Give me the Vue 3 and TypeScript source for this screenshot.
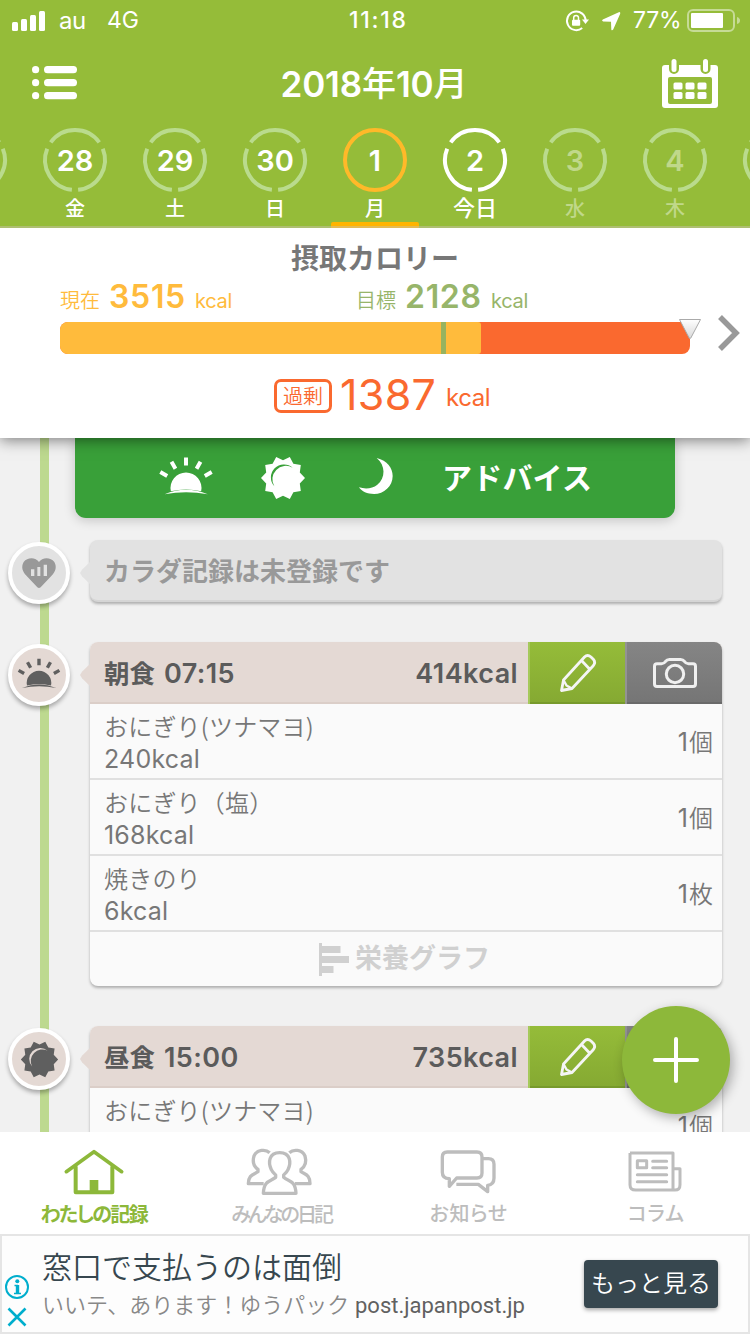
<script setup lang="ts">
interface Day { num: string; label: string; state: 'past' | 'active' | 'today' | 'future' }
interface Food { name: string; kcal: string; amount: string }
interface Meal { title: string; time: string; kcal: string; icon: 'sunrise' | 'sun'; foods: Food[] }

const days: Day[] = [
  { num: '', label: '', state: 'past' },
  { num: '28', label: '金', state: 'past' },
  { num: '29', label: '土', state: 'past' },
  { num: '30', label: '日', state: 'past' },
  { num: '1', label: '月', state: 'active' },
  { num: '2', label: '今日', state: 'today' },
  { num: '3', label: '水', state: 'future' },
  { num: '4', label: '木', state: 'future' },
  { num: '', label: '', state: 'future' },
]

const meals: Meal[] = [
  {
    title: '朝食', time: '07:15', kcal: '414kcal', icon: 'sunrise',
    foods: [
      { name: 'おにぎり(ツナマヨ)', kcal: '240', amount: '個' },
      { name: 'おにぎり（塩）', kcal: '168', amount: '個' },
      { name: '焼きのり', kcal: '6', amount: '枚' },
    ],
  },
  {
    title: '昼食', time: '15:00', kcal: '735kcal', icon: 'sun',
    foods: [{ name: 'おにぎり(ツナマヨ)', kcal: '', amount: '個' }],
  },
]

// Ten-pointed star outline for the midday sun
const sunPoints = Array.from({ length: 20 }, (_, i) => {
  const r = i % 2 === 0 ? 66 : 53
  const a = (i * Math.PI) / 10
  return `${(r * Math.cos(a)).toFixed(1)},${(r * Math.sin(a)).toFixed(1)}`
}).join(' ')
</script>

<template>
  <div class="screen">
    <header class="header">
      <div class="status">
        <svg class="signal" width="33" height="20" viewBox="0 0 33 20" fill="#fff">
          <rect x="0" y="11" width="6" height="9" rx="1.5" /><rect x="9" y="8" width="6" height="12" rx="1.5" />
          <rect x="18" y="4" width="6" height="16" rx="1.5" /><rect x="27" y="0" width="6" height="20" rx="1.5" />
        </svg>
        <span class="carrier">au</span><span class="network">4G</span>
        <span class="clock">11:18</span>
        <svg class="lock" width="24" height="22" viewBox="0 0 24 22" fill="none" stroke="#fff">
          <path d="M20.6 11 A9.3 9.3 0 1 0 17.2 18" stroke-width="2" />
          <path d="M17 9.6 H24 L20.5 14 Z" fill="#fff" stroke="none" />
          <rect x="7" y="9.8" width="8.2" height="6" rx="1" fill="#fff" stroke="none" />
          <path d="M8.7 10 V7.8 a2.4 2.4 0 0 1 4.8 0 V10" stroke-width="1.5" />
        </svg>
        <svg class="locate" width="20" height="20" viewBox="0 0 20 20" fill="#fff"><path d="M16.800 1.200 L.8 8.600 Q-.8 10.200 1.200 10.400 L9 10.800 L9.300 18.400 Q9.800 20 11.200 18.600 L18.200 2.800 Q18.600 .6 16.800 1.200Z" /></svg>
        <span class="percent">77%</span>
        <svg class="battery" width="54" height="24" viewBox="0 0 54 24" fill="none">
          <rect x="1" y="1" width="46" height="21" rx="5" stroke="#c6db96" stroke-width="2" />
          <rect x="4" y="4" width="32" height="15" rx="1" fill="#fff" />
          <path d="M50 8 q3 1 3 3.5 q0 2.500 -3 3.500z" fill="#c6db96" />
        </svg>
      </div>
      <div class="nav">
        <svg class="menu" width="46" height="34" viewBox="0 0 46 34" fill="#fff">
          <g v-for="n in 3" :key="n" :transform="`translate(0 ${(n - 1) * 13})`">
            <circle cx="3.600" cy="3.700" r="3.600" /><rect x="12" y="0" width="33" height="7.300" rx="3.600" />
          </g>
        </svg>
        <h1><b>2018</b><span>年</span><b>10</b><span>月</span></h1>
        <svg width="56" height="50" viewBox="0 0 56 50">
          <rect x="0" y="6" width="56" height="43" rx="3" fill="#fff" />
          <path d="M7 0h10v10a5 5 0 0 1-10 0zM38.500 0h10v10a5 5 0 0 1-10 0z" fill="#95bc39" />
          <rect x="9.500" y="0" width="5" height="13" rx="2.500" fill="#fff" /><rect x="41" y="0" width="5" height="13" rx="2.500" fill="#fff" />
          <rect x="6" y="18" width="44" height="27" rx="2" fill="#95bc39" />
          <g fill="#fff">
            <rect x="11.500" y="23.500" width="9" height="7" rx="1.500" /><rect x="23.500" y="23.500" width="9" height="7" rx="1.500" /><rect x="35.500" y="23.500" width="9" height="7" rx="1.500" />
            <rect x="11.500" y="33" width="9" height="7" rx="1.500" /><rect x="23.500" y="33" width="9" height="7" rx="1.500" /><rect x="35.500" y="33" width="9" height="7" rx="1.500" />
          </g>
        </svg>
      </div>
      <div class="days">
        <div v-for="(d, i) in days" :key="i" class="day" :class="d.state">
          <div class="ring">
            <svg width="64" height="64" viewBox="0 0 64 64" fill="none" stroke-width="4">
              <circle v-if="d.state === 'active'" cx="32" cy="32" r="30" />
              <path v-else d="M7.700 14.400A30 30 0 0 1 56.300 14.400M59.800 20.800A30 30 0 0 1 35.100 61.800M28.900 61.800A30 30 0 0 1 4.200 20.800" />
            </svg>
            <span>{{ d.num }}</span>
          </div>
          <div class="label">{{ d.label }}</div>
        </div>
      </div>
    </header>

    <section class="summary">
      <h2>摂取カロリー</h2>
      <div class="figures">
        <div class="figure now"><span class="cap">現在</span><b>3515</b><span class="unit">kcal</span></div>
        <div class="figure goal"><span class="cap">目標</span><b>2128</b><span class="unit">kcal</span></div>
      </div>
      <div class="gauge">
        <div class="fill"></div><div class="tick"></div>
        <svg class="pointer" width="24" height="22" viewBox="0 0 24 22">
          <defs><linearGradient id="pointer" x2="0" y2="1"><stop offset="0" stop-color="#fff" /><stop offset="1" stop-color="#d8d8d8" /></linearGradient></defs>
          <path d="M1.500 1.500H22.500L12.800 20Q12 21.300 11.200 20Z" fill="url(#pointer)" stroke="#aaa" />
        </svg>
      </div>
      <div class="excess"><span class="badge">過剰</span><b>1387</b><span class="unit">kcal</span></div>
      <svg class="chevron" width="24" height="38" viewBox="0 0 24 38" fill="none" stroke="#999" stroke-width="5.500"><path d="M4 3L20 19L4 35" /></svg>
    </section>

    <main class="timeline">
      <div class="line"></div>
      <div class="advice">
        <svg class="a-sunrise" width="58" height="42" viewBox="0 0 176 126" fill="#fff" stroke="#fff">
          <path d="M42 109A47 47 0 1 1 134 109Q88 99 42 109Z" stroke="none" /><path d="M23 118Q88 92 154 118Q88 106 23 118Z" stroke="none" />
          <path stroke-width="12" d="M88 7V31M44 20L56 41M132 20L120 41M10 51L31 63M166 51L145 63" />
        </svg>
        <svg class="a-sun" width="46" height="44" viewBox="-69 -66 138 132" fill="#fff">
          <polygon :points="sunPoints" /><path fill="#39a039" d="M-26 25A39.300 39.300 0 0 1 29 -31A40.500 40.500 0 0 0 -26 25Z" />
        </svg>
        <svg class="a-moon" width="34" height="36" viewBox="0 0 102 108" fill="#fff"><path d="M53 0C85 8 101 30 101 54C101 85 75 108 45 108C25 108 8 101 0 88C20 94 40 92 55 80C80 60 80 22 53 0Z" /></svg>
        <span>アドバイス</span>
      </div>

      <div class="entry body-entry">
        <div class="node">
          <svg width="34" height="31" viewBox="0 0 102 93">
            <path fill="#999" d="M51 12C60-2 85-4 97 12C106 28 99 42 90 52L56 88Q51 92 46 88L12 52C3 42-4 28 5 12C17-4 42-2 51 12Z" />
            <path fill="#e2e2e2" d="M27 34h10v20H27zM46 27h9v27H46zM65 20h10v34H65z" />
          </svg>
        </div>
        <div class="card-body">カラダ記録は未登録です</div>
      </div>

      <div v-for="m in meals" :key="m.title" class="entry meal">
        <div class="node">
          <svg v-if="m.icon === 'sunrise'" class="n-sunrise" width="46" height="33" viewBox="0 0 176 126" fill="#5f5f5f" stroke="#5f5f5f">
            <path d="M42 109A47 47 0 1 1 134 109Q88 99 42 109Z" stroke="none" /><path d="M23 118Q88 92 154 118Q88 106 23 118Z" stroke="none" />
            <path stroke-width="13" d="M88 7V31M44 20L56 41M132 20L120 41M10 51L31 63M166 51L145 63" />
          </svg>
          <svg v-else width="39" height="39" viewBox="-69 -69 138 138" fill="#5f5f5f">
            <polygon :points="sunPoints" /><path fill="#e4d9d4" d="M-26 25A39.300 39.300 0 0 1 29 -31A41 41 0 0 0 -26 25Z" />
          </svg>
        </div>
        <div class="card">
          <div class="card-head">
            <div class="meal-title"><span class="jp">{{ m.title }}</span><span class="time">{{ m.time }}</span></div>
            <div class="total">{{ m.kcal }}</div>
            <div class="btn edit">
              <svg width="44" height="44" viewBox="0 0 44 44" fill="none" stroke="#f5f5f5" stroke-width="2.800" stroke-linejoin="round">
                <path d="M5.500 39.500L7.500 29L28.500 6Q31.500 3 35 6L37.500 8.500Q40 11.500 37 15L16 37.500ZM25.500 9.500L34 18.500" /><path d="M7.500 29L10.500 34.500L16 37.500" stroke-width="2.400" />
              </svg>
            </div>
            <div class="btn photo">
              <svg width="48" height="38" viewBox="0 0 48 38" fill="none" stroke="#f0f0f0" stroke-width="3">
                <path d="M6 9.800H10.500Q13 9.800 14.500 7.500Q16 5.500 18.500 5.500H29.500Q32 5.500 33.500 7.500Q35 9.800 37.500 9.800H42Q44.500 9.800 44.500 12.300V30Q44.500 32.500 42 32.500H6Q3.500 32.500 3.500 30V12.300Q3.500 9.800 6 9.800Z" /><circle cx="24" cy="20" r="8.700" />
              </svg>
            </div>
          </div>
          <div v-for="f in m.foods" :key="f.name" class="food">
            <div><div class="name">{{ f.name }}</div><div v-if="f.kcal" class="kcal">{{ f.kcal }}kcal</div></div>
            <div class="amount"><i>1</i>{{ f.amount }}</div>
          </div>
          <div v-if="m.foods.length > 1" class="graph">
            <svg width="30" height="33" viewBox="0 0 30 33" fill="#d0d0d0"><path d="M0 0H3V3H21.500V10H3V13H30V20H3V23H14.500V30H3V33H0Z" /></svg>
            <span>栄養グラフ</span>
          </div>
        </div>
      </div>
      <div class="fab"><svg width="46" height="46" viewBox="0 0 46 46" stroke="#fff" stroke-width="4" stroke-linecap="round"><path d="M23 2V44M2 23H44" /></svg></div>
    </main>

    <nav class="tabs">
      <div class="tab on">
        <svg width="60" height="46" viewBox="191 58 180 138" fill="none" stroke="#8db83a" stroke-linecap="round" stroke-linejoin="round">
          <path stroke-width="11" d="M198 126L281 66L364 126" /><path stroke-width="12" d="M226 112V188H336V112" /><path d="M268 151H294V188H268Z" fill="#8db83a" stroke="none" />
        </svg>
        <span class="t1">わたしの記録</span>
      </div>
      <div class="tab">
        <svg class="i2" width="66" height="48" viewBox="737 54 198 144" fill="none" stroke="#bdbdbd" stroke-width="10" stroke-linejoin="round">
          <path d="M808 68C796 57 770 58 761 78C755 98 763 111 773 118V125C760 134 744 134 744 161H790" />
          <path d="M867 68C879 57 905 58 914 78C920 98 912 111 902 118V125C915 134 929 134 929 161H884" />
          <path d="M838 68C805 68 803 98 813 119Q817 128 826 135V142C810 155 791 150 789 190H887C885 150 865 155 850 142V135Q859 128 863 119C873 98 871 68 838 68Z" />
        </svg>
        <span class="t2">みんなの日記</span>
      </div>
      <div class="tab">
        <svg class="i3" width="56" height="46" viewBox="197 56 168 138" fill="none" stroke="#bdbdbd" stroke-width="10" stroke-linejoin="round">
          <path d="M219 65H308Q323 65 323 80V128Q323 143 308 143H247L225 168V145Q204 145 204 126V80Q204 65 219 65Z" />
          <path d="M326 85H342Q359 85 359 102V143Q359 163 340 165V184L312 162H246" />
        </svg>
        <span class="t3">お知らせ</span>
      </div>
      <div class="tab">
        <svg class="i3" width="54" height="44" viewBox="761 62 162 132" fill="none" stroke="#bdbdbd" stroke-width="9" stroke-linejoin="round">
          <path d="M767 71H896V180M767 71V166Q767 182 784 182H902Q917 182 917 166V118H898" /><rect x="789" y="94" width="28" height="21" />
          <path stroke-linecap="round" d="M835 96H877M835 115H877M789 136H877M789 157H877" />
        </svg>
        <span class="t4">コラム</span>
      </div>
    </nav>

    <aside class="ad">
      <div class="ad-icons">
        <svg width="24" height="24" viewBox="0 0 24 24" fill="none" stroke="#00aecd"><circle cx="12" cy="12" r="11" stroke-width="2" /><path stroke-width="3.400" d="M12.500 10V19" /><path stroke-width="1.600" d="M9.500 10.500H13M9 18.500H16" /><circle cx="12.300" cy="6.300" r="2" fill="#00aecd" stroke="none" /></svg>
        <svg width="20" height="20" viewBox="0 0 20 20" stroke="#00aecd" stroke-width="2.600"><path d="M1.500 1.500L18.500 18.500M18.500 1.500L1.500 18.500" /></svg>
      </div>
      <div class="ad-text">
        <div class="ad-title">窓口で支払うのは面倒</div>
        <div class="ad-sub"><span class="copy">いいテ、あります！ゆうパック</span><span class="url">post.japanpost.jp</span></div>
      </div>
      <div class="ad-btn">もっと見る</div>
    </aside>
  </div>
</template>

<style>
html, body { margin: 0; background: #f1f1f1; overflow: hidden; }
</style>

<style scoped>
* { box-sizing: border-box; }
.screen { width: 750px; height: 1334px; display: flex; flex-direction: column; overflow: hidden; white-space: nowrap; font-family: Inter, "Noto Sans CJK JP", sans-serif; background: #f1f1f1; }
svg { display: block; flex: none; overflow: visible; }
h1, h2 { margin: 0; }
.header { flex: none; height: 228px; background: #95bc39; color: #fff; overflow: hidden; position: relative; z-index: 3; }
.header::after { content: ""; position: absolute; left: 0; right: 0; bottom: 0; height: 2px; background: rgba(200, 193, 170, .5); }
.status { height: 40px; display: grid; grid-template-columns: 47px 48px 242px 217px 36px 31px 54px 1fr; padding-left: 12px; align-items: center; font-size: 23px; line-height: 41px; }
.carrier { font-size: 24px; letter-spacing: -.4px; }
.network { font-size: 23px; }
.clock { font-weight: 500; letter-spacing: 1.700px; }
.lock { margin-left: -1px; }
.percent { letter-spacing: -.3px; }
.nav { height: 88px; display: flex; justify-content: space-between; align-items: center; padding: 0 32px; }
.menu { margin-top: -2px; margin-right: 8px; }
h1 { font: 500 34px/50px "Noto Sans CJK JP", sans-serif; display: flex; align-items: center; }
h1 span { margin-top: -5px; }
h1 b { font: 600 35px/50px Inter, sans-serif; letter-spacing: -.2px; }
.days { display: flex; margin-left: -75px; width: 900px; height: 100px; }
.day { width: 100px; display: flex; flex-direction: column; align-items: center; position: relative; }
.ring { width: 64px; height: 64px; display: grid; place-items: center; font-size: 29px; font-weight: 600; }
.ring > * { grid-area: 1 / 1; }
.ring svg { stroke: #badb8d; }
.label { font: 500 20px/31px "Noto Sans CJK JP", sans-serif; }
.active svg { stroke: #ffb929; }
.active::after { content: ""; position: absolute; left: 6px; right: 6px; bottom: 0; height: 6px; background: #ffb400; border-radius: 2px 2px 0 0; }
.today svg { stroke: #fff; }
.today .label { font-size: 22px; line-height: 29px; }
.future span, .future .label { color: #c0d88a; }
.summary { flex: none; height: 210px; background: #fff; position: relative; z-index: 2; box-shadow: 0 2px 14px rgba(0, 0, 0, .5); display: flex; flex-direction: column; }
h2 { font: 700 28px/36px "Noto Sans CJK JP", sans-serif; color: #777; text-align: center; padding-top: 11px; height: 48px; }
.figures { display: flex; padding-left: 60px; height: 46px; }
.figure { width: 296px; display: flex; align-items: baseline; line-height: 42px; }
.figure .cap { font-family: "Noto Sans CJK JP", sans-serif; font-weight: 350; font-size: 20px; width: 49px; }
.figure b { font-size: 32px; font-weight: 600; width: 86px; letter-spacing: .7px; }
.figure .unit { font-size: 20px; letter-spacing: -.3px; }
.now { color: #ffbb3c; }
.goal { color: #97b56a; }
.gauge { width: 630px; height: 32px; margin-left: 60px; border-radius: 8px; background: #fa692f; position: relative; }
.fill { width: 421px; height: 32px; background: #ffbb3c; border-radius: 8px 3px 3px 8px; }
.tick { position: absolute; left: 381px; top: 0; width: 5px; height: 32px; background: #97b35f; }
.pointer { position: absolute; left: 618px; top: -4px; }
.excess { display: flex; align-items: baseline; color: #fa692f; padding-left: 274px; margin-top: 12px; line-height: 56px; }
.badge { font: 350 20px/27px "Noto Sans CJK JP", sans-serif; border: 3.500px solid #fa692f; border-radius: 7px; width: 58px; height: 34px; text-align: center; margin-right: 8px; position: relative; top: -6px; }
.excess b { font-size: 43px; font-weight: 400; width: 106px; letter-spacing: .3px; }
.excess .unit { font-size: 24px; position: relative; top: -4px; letter-spacing: -.4px; }
.chevron { position: absolute; left: 716px; top: 86px; }
.timeline { flex: none; height: 694px; position: relative; overflow: hidden; z-index: 1; }
.line { position: absolute; left: 40px; top: 0; width: 9px; height: 694px; background: #bdd98f; }
.advice { width: 600px; height: 80px; margin-left: 75px; background: #39a039; border-radius: 0 0 11px 11px; box-shadow: 0 2px 12px rgba(0, 0, 0, .2); display: flex; align-items: center; color: #fff; padding-left: 82px; }
.a-sunrise { margin-top: -4px; }
.a-sun { margin-left: 45px; }
.a-moon { margin-left: 53px; margin-top: -5px; }
.advice span { font: 700 30px/50px "Noto Sans CJK JP", sans-serif; margin: -4px 0 0 49px; letter-spacing: .2px; }
.entry { position: relative; margin: 22px 28px 0 90px; }
.node { position: absolute; left: -82px; top: 2px; width: 62px; height: 62px; border: 4px solid #fff; border-radius: 50%; background: #e4d9d4; box-shadow: 0 3px 4px rgba(0, 0, 0, .3); display: grid; place-items: center; }
.body-entry .node { background: #e2e2e2; }
.n-sunrise { margin-top: -3px; }
.card-body, .card { position: relative; border-radius: 8px; box-shadow: 0 2px 3px rgba(0, 0, 0, .28); }
.card-body { height: 62px; background: #e2e2e2; border-bottom: 2px solid #d5d5d5; color: #999; font: 700 26px/60px "Noto Sans CJK JP", sans-serif; padding-left: 14px; }
.card-body::before, .card::before { content: ""; position: absolute; left: -10px; top: 21px; width: 11px; height: 24px; background: #e2e2e2; clip-path: polygon(100% 0, 20% 35%, 0 50%, 20% 65%, 100% 100%); }
.card::before { background: #e4d9d4; }
.meal { margin-top: 40px; }
.card { background: #fafafa; height: 344px; }
.card-head { height: 62px; display: flex; background: #e4d9d4; border-radius: 8px 8px 0 0; overflow: hidden; color: #5b5b5b; font-weight: 600; font-size: 27px; line-height: 63px; box-shadow: inset 0 -2px #dbcec8; }
.meal-title { flex: 1; padding-left: 14px; display: flex; letter-spacing: .4px; }
.jp { font-family: "Noto Sans CJK JP", sans-serif; font-weight: 700; width: 60px; font-size: 25.500px; letter-spacing: 0; line-height: 60px; }
.total { padding-right: 10px; letter-spacing: .4px; }
.btn { width: 97px; display: grid; place-items: center; }
.edit { background: linear-gradient(#95bc39, #85a932); box-shadow: inset 2px 0 #a5c95b, inset 0 -2px #779a2c; }
.photo { background: linear-gradient(#858585, #757575); box-shadow: inset 2px 0 #939393, inset 0 -2px #6a6a6a; }
.btn svg { margin-left: 2px; }
.food { height: 76px; border-bottom: 2px solid #e0e0e0; padding: 6px 9px 0 14px; display: flex; justify-content: space-between; color: #777; }
.name { font: 350 24px/32px "Noto Sans CJK JP", sans-serif; letter-spacing: .2px; }
.kcal { font-size: 25px; line-height: 34px; letter-spacing: .2px; }
.amount { font: 350 24px/62px "Noto Sans CJK JP", sans-serif; }
.amount i { font: 400 25px/60px Inter, sans-serif; margin-right: 1px; }
.graph { height: 54px; display: flex; align-items: center; padding-left: 229px; color: #d0d0d0; font: 700 27px/54px "Noto Sans CJK JP", sans-serif; }
.graph span { margin: -4px 0 0 6px; }
.fab { position: absolute; left: 622px; top: 568px; width: 108px; height: 108px; border-radius: 50%; background: #8db83a; display: grid; place-items: center; box-shadow: 3px 4px 12px rgba(0, 0, 0, .3); }
.tabs { flex: none; height: 102px; background: #fff; display: grid; grid-template-columns: repeat(4, 1fr); position: relative; z-index: 2; }
.tab { display: flex; flex-direction: column; align-items: center; padding-top: 16px; color: #bdbdbd; font: 500 20px/34px "Noto Sans CJK JP", sans-serif; font-feature-settings: "palt"; }
.tab svg { height: 48px; }
.i2 { margin-left: -5px; }
.i3 { margin-left: -2px; }
.on { color: #8db83a; font-weight: 700; }
.t1 { letter-spacing: -1.700px; padding-top: 1px; }
.t2 { letter-spacing: -2.900px; padding-top: 1px; }
.t3 { letter-spacing: .7px; }
.t4 { letter-spacing: .9px; }
.ad { flex: none; height: 100px; background: #fdfdfd; border: 2px solid #e5e5e5; display: flex; align-items: center; position: relative; z-index: 2; }
.ad-icons { width: 40px; padding: 39px 0 0 3px; display: flex; flex-direction: column; gap: 8px; align-self: flex-start; }
.ad-icons svg + svg { margin-left: 2px; }
.ad-text { width: 542px; padding-bottom: 5px; }
.ad-title { font: 350 30px/42px "Noto Sans CJK JP", sans-serif; color: #37474f; }
.ad-sub { display: flex; align-items: baseline; height: 34px; line-height: 34px; }
.copy { font: 350 22px/34px "Noto Sans CJK JP", sans-serif; color: #888; width: 313px; }
.url { font-family: Roboto, sans-serif; font-size: 22px; color: #616161; }
.ad-btn { width: 134px; height: 48px; background: #37474f; color: #fff; border-radius: 4px; box-shadow: 0 2px 4px rgba(0, 0, 0, .35); font: 350 24px/44px "Noto Sans CJK JP", sans-serif; text-align: center; }
</style>
